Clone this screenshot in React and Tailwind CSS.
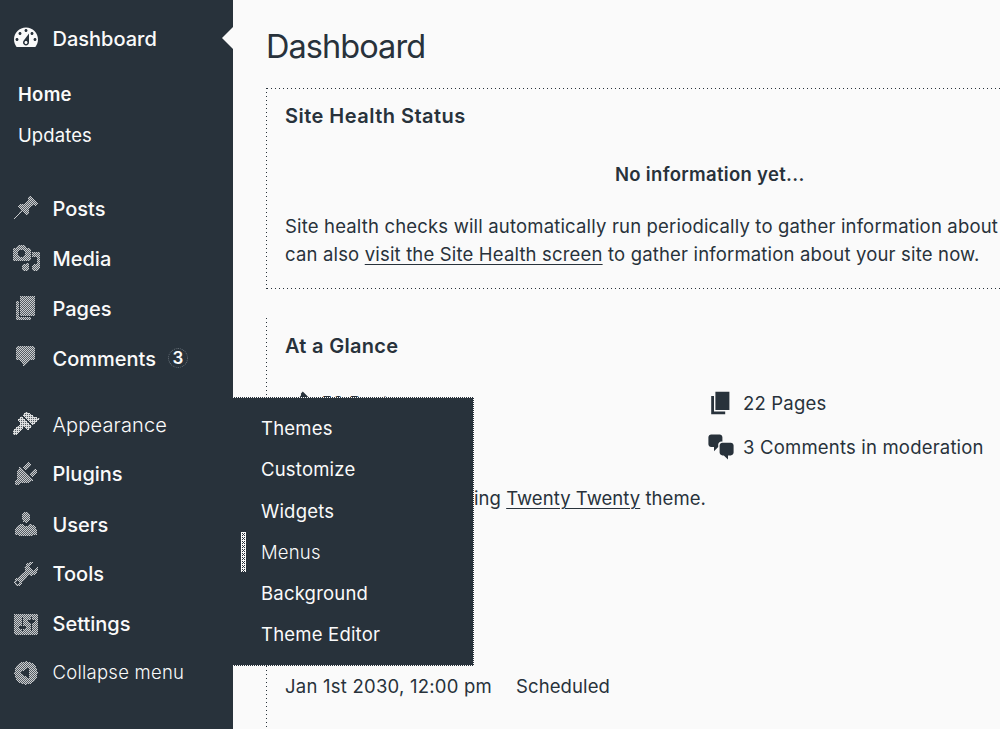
import React from "react";

const DARK = "#28323b";
const LIGHT = "#fafafa";

const icons = {
  dashboard:
    "M3.76 16h12.48c1.1-1.37 1.76-3.11 1.76-5 0-4.42-3.58-8-8-8s-8 3.58-8 8c0 1.89.66 3.63 1.76 5zM10 4c.55 0 1 .45 1 1s-.45 1-1 1-1-.45-1-1 .45-1 1-1zM6 6c.55 0 1 .45 1 1s-.45 1-1 1-1-.45-1-1 .45-1 1-1zm8 0c.55 0 1 .45 1 1s-.45 1-1 1-1-.45-1-1 .45-1 1-1zm-5.37 5.55L12 7v6c0 1.1-.9 2-2 2s-2-.9-2-2c0-.57.24-1.08.63-1.45zM4 10c.55 0 1 .45 1 1s-.45 1-1 1-1-.45-1-1 .45-1 1-1zm12 0c.55 0 1 .45 1 1s-.45 1-1 1-1-.45-1-1 .45-1 1-1zm-5 3c0-.55-.45-1-1-1s-1 .45-1 1 .45 1 1 1 1-.45 1-1z",
  posts:
    "M11.3 3.4l1.4-1.7 5.2 5.2-1.6 1.5c-.9-.5-1.7-.3-2.4.3l-1.6 1.6c-.6.8-.6 2-.1 3l-1.5 1.5-2.8-2.7L2.2 17.7l-.3-.3 5.2-6.2-2.4-2.4 1.4-1.5c1 .5 2.2.5 3-.2l1.7-1.7c.7-.7.9-1.4.5-2z",
  media:
    "M13 11V4c0-.55-.45-1-1-1h-1.67L9 1H5L3.67 3H2c-.55 0-1 .45-1 1v7c0 .55.45 1 1 1h10c.55 0 1-.45 1-1zM7 4.5c1.38 0 2.5 1.12 2.5 2.5S8.38 9.5 7 9.5 4.5 8.38 4.5 7 5.62 4.5 7 4.5zM14 6h5v10.5c0 1.38-1.12 2.5-2.5 2.5S14 17.88 14 16.5s1.12-2.5 2.5-2.5c.17 0 .34.02.5.05V9h-3V6zm-4 8.05V13h2v3.5c0 1.38-1.12 2.5-2.5 2.5S7 17.88 7 16.5 8.12 14 9.5 14c.17 0 .34.02.5.05z",
  pages: "M6 15V2h10v13H6zm-1 1h8v2H3V5h2v11z",
  comments:
    "M4.5 2h10c.8 0 1.5.7 1.5 1.5v6.5c0 .8-.7 1.5-1.5 1.5h-1.5L8.6 16 7.200 13 5.800 11.500H4.500C3.700 11.500 3 10.800 3 10V3.500C3 2.700 3.700 2 4.500 2z",
  appearance:
    "M14.48 11.06L7.41 3.99l1.5-1.5c.5-.56 2.3-.47 3.51.32 1.21.8 1.43 1.28 2.91 2.1 1.18.64 2.45 1.26 4.45.85zm-.71.71L6.7 4.7 4.93 6.47c-.39.39-.39 1.02 0 1.41l1.06 1.06c.39.39.39 1.03 0 1.42-.6.6-1.43 1.11-2.21 1.69-.35.26-.7.53-1.01.84C1.43 14.23.4 16.08 1.4 17.07c.99 1 2.84-.03 4.18-1.36.31-.31.58-.66.85-1.02.57-.78 1.08-1.61 1.69-2.21.39-.39 1.02-.39 1.41 0l1.06 1.06c.39.39 1.02.39 1.41 0z",
  plugins:
    "M13.11 4.36L9.87 7.6 8 5.73l3.24-3.24c.35-.34 1.05-.2 1.56.32.52.51.66 1.21.31 1.55zm-8 1.77l.91-1.12 9.01 9.01-1.19.84c-.71.71-2.63 1.16-3.82 1.16H6.14L4.9 17.26c-.59.59-1.54.59-2.12 0-.59-.58-.59-1.53 0-2.12l1.24-1.24v-3.88c0-1.13.4-3.19 1.09-3.89zm7.26 3.97l3.24-3.24c.34-.35 1.04-.21 1.55.31.52.51.66 1.21.31 1.55l-3.24 3.25z",
  users:
    "M10 9.25c-2.27 0-2.73-3.44-2.73-3.44C7 4.02 7.82 2 9.97 2c2.16 0 2.98 2.02 2.71 3.81 0 0-.41 3.44-2.68 3.44zm0 2.57L12.72 10c2.39 0 4.52 2.33 4.52 4.53v2.49s-3.65 1.13-7.24 1.13c-3.65 0-7.24-1.13-7.24-1.13v-2.49c0-2.25 1.94-4.48 4.47-4.48z",
  tools:
    "M16.68 9.77c-1.34 1.34-3.3 1.67-4.95.99l-5.41 6.52c-.99.99-2.59.99-3.58 0s-.99-2.59 0-3.57l6.52-5.42c-.68-1.65-.35-3.61.99-4.95 1.28-1.28 3.12-1.62 4.72-1.06l-2.89 2.89 2.82 2.82 2.86-2.87c.53 1.58.18 3.39-1.08 4.65zM3.81 16.21c.4.39 1.04.39 1.43 0 .4-.4.4-1.04 0-1.43-.39-.4-1.03-.4-1.43 0-.39.39-.39 1.03 0 1.43z",
  settings:
    "M18 16V4c0-.55-.45-1-1-1H3c-.55 0-1 .45-1 1v12c0 .55.45 1 1 1h14c.55 0 1-.45 1-1zM8 11h1c.55 0 1 .45 1 1s-.45 1-1 1H8v1.5c0 .28-.22.5-.5.5s-.5-.22-.5-.5V13H6c-.55 0-1-.45-1-1s.45-1 1-1h1V5.5c0-.28.22-.5.5-.5s.5.22.5.5V11zm5-2h-1c-.55 0-1-.45-1-1s.45-1 1-1h1V5.5c0-.28.22-.5.5-.5s.5.22.5.5V7h1c.55 0 1 .45 1 1s-.45 1-1 1h-1v5.5c0 .28-.22.5-.5.5s-.5-.22-.5-.5V9z",
  collapse:
    "M10 2.16c4.33 0 7.84 3.51 7.84 7.84s-3.51 7.84-7.84 7.84S2.16 14.33 2.16 10 5.71 2.16 10 2.16zm2 11.72V6.12L6.18 9.97z",
  chat: "M11 6h-.82C9.07 6 8 7.2 8 8.16V10l-3 3v-3H3c-1.1 0-2-.9-2-2V3c0-1.1.9-2 2-2h6c1.1 0 2 .9 2 2v3zm0 1h6c1.1 0 2 .9 2 2v5c0 1.1-.9 2-2 2h-2v3l-3-3h-1c-1.1 0-2-.9-2-2V9c0-1.1.9-2 2-2z",
};

function SidebarIcon({ name }) {
  const solid = name === "dashboard";
  return (
    <svg className="h-[30px] w-[30px] shrink-0" viewBox="0 0 30 30">
      <defs>
        <pattern id={"dither-" + name} width="2" height="2" patternUnits="userSpaceOnUse" patternTransform="scale(.66667)">
          <rect width="1" height="1" fill={LIGHT} />
          <rect x="1" y="1" width="1" height="1" fill={LIGHT} />
          {name === "appearance" && <rect x="1" width="1" height="1" fill={LIGHT} />}
        </pattern>
      </defs>
      <path
        transform="scale(1.5)"
        d={icons[name]}
        fill={solid ? LIGHT : "url(#dither-" + name + ")"}
        shapeRendering={solid ? "auto" : "crispEdges"}
      />
    </svg>
  );
}

function GlanceItem({ icon, label }) {
  return (
    <span className="flex h-[44px] items-center gap-2 whitespace-nowrap tracking-[0.19px]">
      <svg className="h-[28px] w-[28px] shrink-0" viewBox="0 0 20 20">
        <path d={icons[icon]} fill={DARK} />
      </svg>
      {label}
    </span>
  );
}

function MenuItem({ icon, label, badge, low, text = "text-[20px] font-medium", className = "" }) {
  return (
    <a className={"flex h-[50px] items-center pl-[11px] " + className}>
      <SidebarIcon name={icon} />
      <span className={"ml-[11.5px] whitespace-nowrap " + text + (low ? " pt-[2px]" : "")}>{label}</span>
      {badge && (
        <span className="ml-3 flex h-5 w-5 items-center justify-center rounded-full border border-dotted border-[#6b747c] pt-[2px] text-[17px] font-semibold">
          {badge}
        </span>
      )}
    </a>
  );
}

const HLine = () => (
  <div className="h-px w-full bg-[repeating-linear-gradient(90deg,#28323b_0_1px,transparent_1px_4px)]" />
);
const VLine = () => (
  <div className="w-px shrink-0 self-stretch bg-[repeating-linear-gradient(180deg,#28323b_0_1px,transparent_1px_4px)]" />
);

const LINK = "underline decoration-1 underline-offset-[3px]";
const submenu = ["Themes", "Customize", "Widgets", "Menus", "Background", "Theme Editor"];

export default function App() {
  return (
    <div className="relative flex h-[729px] w-[1000px] overflow-hidden bg-[#fafafa] font-['Inter',sans-serif] text-[#28323b]">
      <nav className="flex w-[233px] shrink-0 flex-col bg-[#28323b] text-[#fafafa]">
        <div className="flex h-[76px] items-center justify-between">
          <MenuItem icon="dashboard" label="Dashboard" low />
          <svg className="h-[22px] w-[11px]" viewBox="0 0 11 22">
            <path d="M11 0v22L0 11z" fill={LIGHT} />
          </svg>
        </div>
        <div className="flex h-[107px] flex-col pl-[18px] text-[18.5px]">
          <span className="flex h-[38px] items-center font-semibold tracking-[0.3px]">Home</span>
          <span className="flex h-[44px] items-center tracking-[0.1px]">Updates</span>
        </div>
        <MenuItem icon="posts" label="Posts" low />
        <MenuItem icon="media" label="Media" low />
        <MenuItem icon="pages" label="Pages" low />
        <MenuItem icon="comments" label="Comments" badge="3" low />
        <MenuItem icon="appearance" label="Appearance" text="text-[20px] font-light tracking-[0.15px]" low className="mt-4" />
        <MenuItem icon="plugins" label="Plugins" />
        <MenuItem icon="users" label="Users" low />
        <MenuItem icon="tools" label="Tools" />
        <MenuItem icon="settings" label="Settings" />
        <MenuItem icon="collapse" label="Collapse menu" text="text-[18.5px] font-light tracking-[0.25px]" className="-mt-px" />
      </nav>

      <main className="flex w-[767px] flex-col pl-[33px]">
        <h1 className="flex h-[88px] items-center whitespace-nowrap pt-[7px] text-[32.5px] tracking-[-0.95px]">Dashboard</h1>
        <section className="flex h-[201px]">
          <VLine />
          <div className="flex grow flex-col">
            <HLine />
            <div className="flex grow flex-col whitespace-nowrap pl-[18px] text-[18.5px] leading-[28px] tracking-[0.17px]">
              <h2 className="mt-[13px] text-[20px] font-semibold leading-[28px] tracking-[0.47px]">Site Health Status</h2>
              <p className="mt-[30px] pl-[330px] font-semibold tracking-[0.3px]">No information yet...</p>
              <p className="mt-[24px]">Site health checks will automatically run periodically to gather information about</p>
              <p>
                can also <a className={LINK}>visit the Site Health screen</a> to gather information about your site now.
              </p>
            </div>
            <HLine />
          </div>
        </section>
        <section className="mt-[29px] flex h-[411px]">
          <VLine />
          <div className="flex grow flex-col whitespace-nowrap pl-[18px] text-[18.5px] leading-[28px]">
            <h2 className="mt-[14px] text-[20px] font-semibold leading-[28px] tracking-[0.3px]">At a Glance</h2>
            <div className="mt-[21px] grid grid-cols-[422px_1fr]">
              <GlanceItem icon="posts" label="52 Posts" />
              <GlanceItem icon="pages" label="22 Pages" />
              <span />
              <GlanceItem icon="chat" label="3 Comments in moderation" />
            </div>
            <p className="mt-[14px] pl-[189px] leading-[30px] tracking-[0.05px]">
              ing <a className={LINK}>Twenty Twenty</a> theme.
            </p>
            <p className="mt-[159px] flex gap-6 tracking-[0.23px]">
              <span>Jan 1st 2030, 12:00 pm</span>
              <span className="tracking-[0.1px]">Scheduled</span>
            </p>
          </div>
        </section>
      </main>

      <div className="absolute left-[233px] top-[397px] flex h-[269px] w-[241px] flex-col border-y border-r border-dotted border-[#fafafa] bg-[#28323b] pt-[10.5px] text-[18.5px] text-[#fafafa]">
        {submenu.map((label) => (
          <a key={label} className="flex h-[41.2px] shrink-0 items-center pl-2">
            {label === "Menus" ? (
              <svg className="-mt-[2px] h-[40px] w-[5px]" viewBox="0 0 5 40" shapeRendering="crispEdges">
                <defs>
                  <pattern id="dither-bar" width="4" height="4" patternUnits="userSpaceOnUse">
                    <rect width="4" height="4" fill={LIGHT} />
                    <rect x="1" y="1" width="1" height="1" fill={DARK} />
                    <rect x="3" y="1" width="1" height="1" fill={DARK} />
                    <rect x="2" y="2" width="1" height="1" fill={DARK} />
                    <rect x="1" y="3" width="1" height="1" fill={DARK} />
                    <rect x="3" y="3" width="1" height="1" fill={DARK} />
                  </pattern>
                </defs>
                <rect width="5" height="40" fill="url(#dither-bar)" />
              </svg>
            ) : (
              <span className="w-[5px]" />
            )}
            <span className={"ml-[15px] tracking-[0.2px] " + (label === "Menus" ? "font-light" : "")}>{label}</span>
          </a>
        ))}
      </div>
    </div>
  );
}
